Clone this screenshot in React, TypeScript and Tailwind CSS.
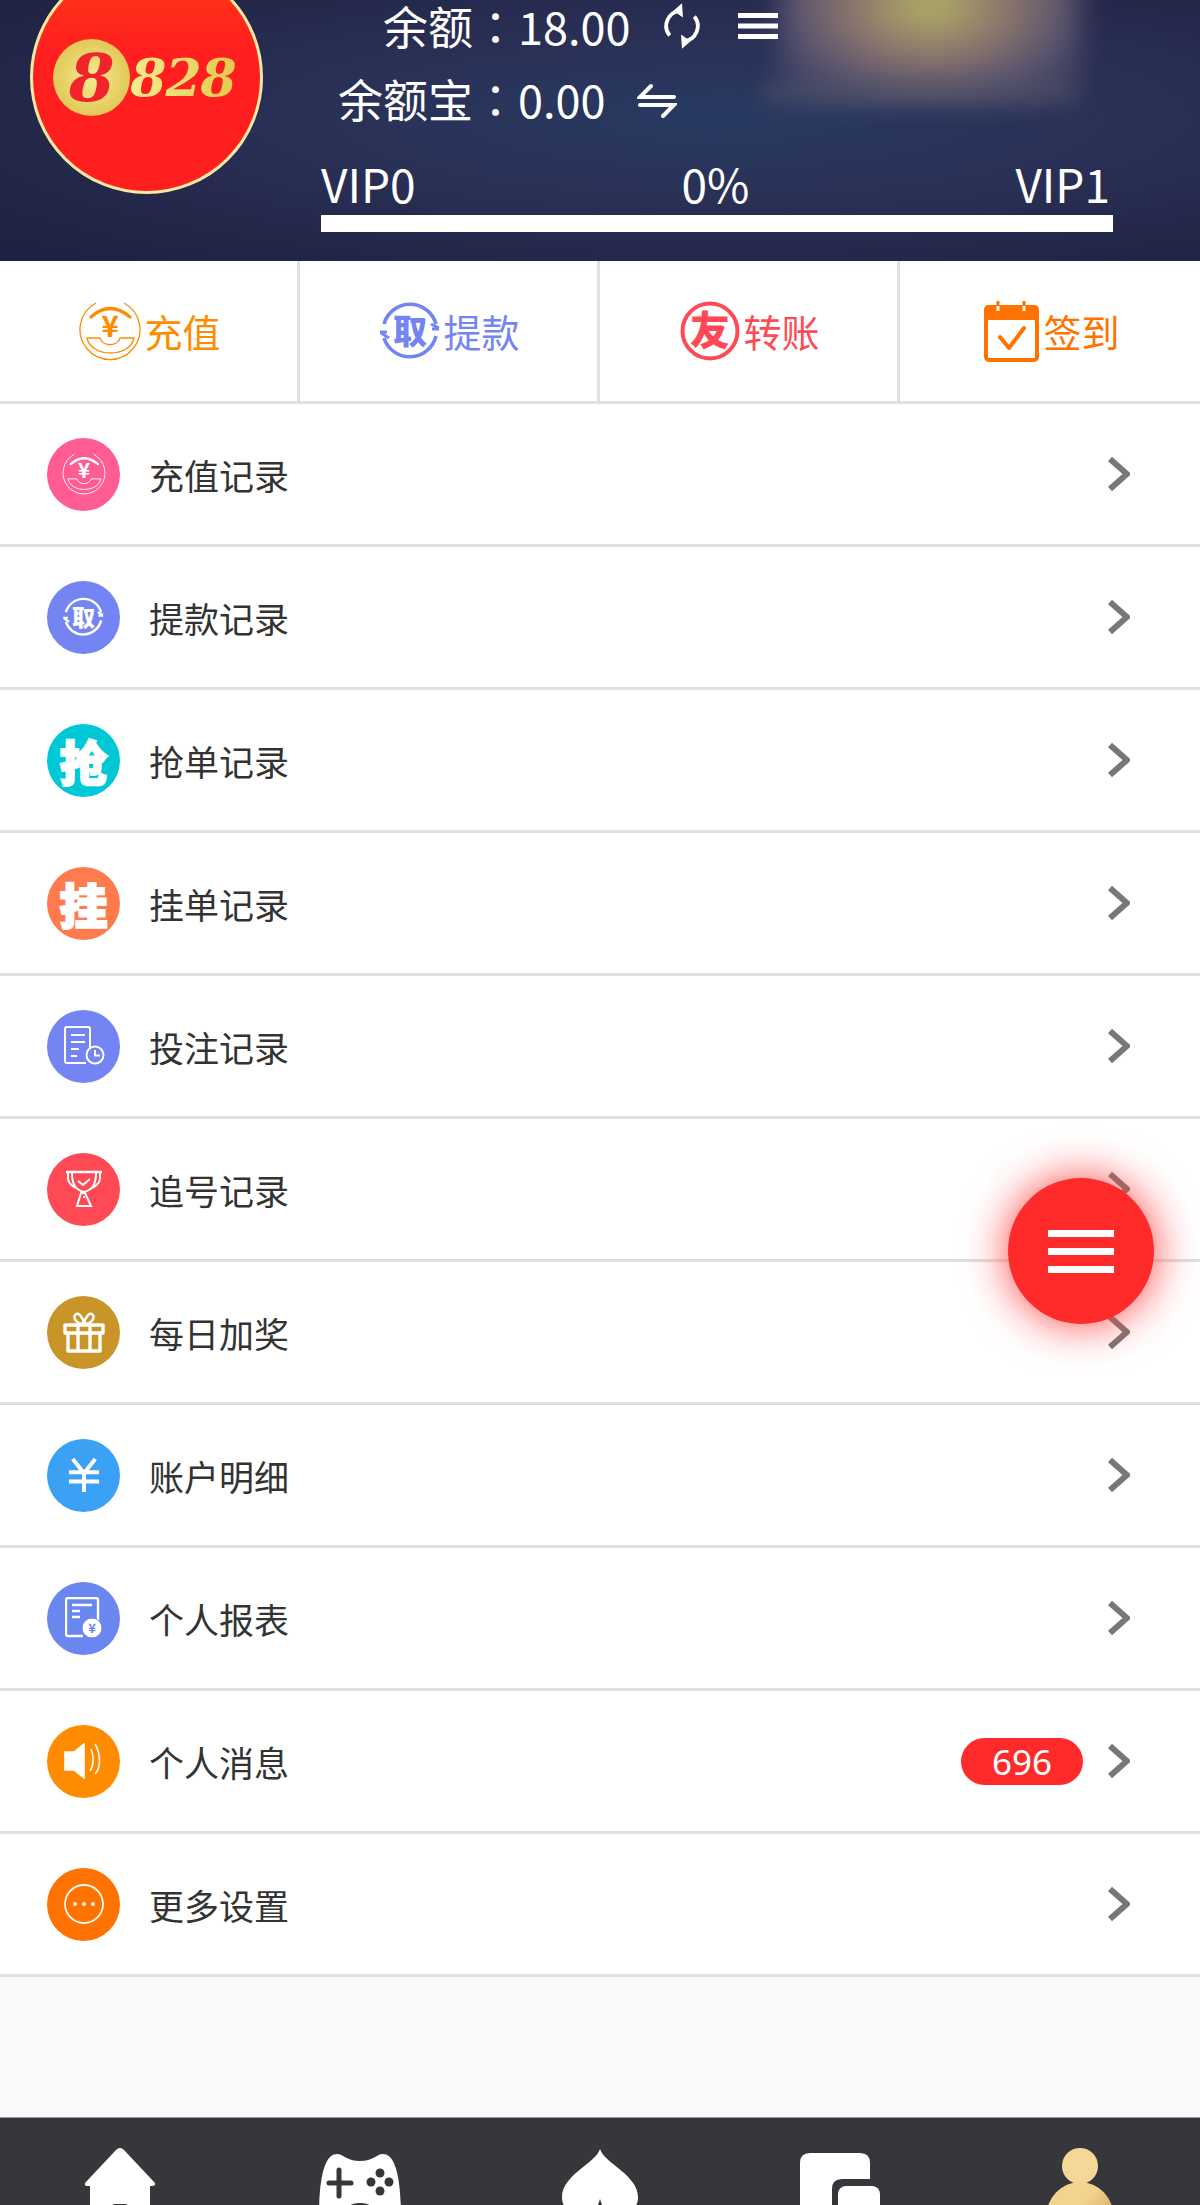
import React from 'react';

const ROWS = [
  { label: '充值记录', color: 'bg-[#ff5c93]', icon: 'coin' },
  { label: '提款记录', color: 'bg-[#7484f3]', icon: 'withdraw' },
  { label: '抢单记录', color: 'bg-[#00c8d7]', icon: 'grab' },
  { label: '挂单记录', color: 'bg-[#ff7a4d]', icon: 'hang' },
  { label: '投注记录', color: 'bg-[#7484f3]', icon: 'bet' },
  { label: '追号记录', color: 'bg-[#ff4a55]', icon: 'trophy' },
  { label: '每日加奖', color: 'bg-[#c99428]', icon: 'gift' },
  { label: '账户明细', color: 'bg-[#3ba1f5]', icon: 'yuan' },
  { label: '个人报表', color: 'bg-[#6a87f0]', icon: 'report' },
  { label: '个人消息', color: 'bg-[#ff8c00]', icon: 'sound', badge: '696' },
  { label: '更多设置', color: 'bg-[#ff7200]', icon: 'more' }
];

const CoinIcon = ({ className }: { className: string }) => (
  <svg viewBox="0 0 62 60" className={className} fill="none" stroke="currentColor">
    <path d="M17 2 A30 30 0 1 0 45 2" strokeWidth="1.3" />
    <path d="M12 16 Q31 -1 51 16" strokeWidth="3.2" strokeLinecap="round" />
    <text x="31" y="36" textAnchor="middle" fontSize="30" fontWeight="700" fill="currentColor" stroke="none">¥</text>
    <path d="M8 37 H21 C23 46 39 46 41 37 H55 C51 57 12 57 8 37 Z" strokeWidth="1.3" />
  </svg>
);

const WithdrawIcon = ({ className }: { className: string }) => (
  <svg viewBox="0 0 60 62" className={className} fill="none" stroke="currentColor">
    <path d="M4 24 A27 27 0 0 1 56 24" strokeWidth="3.6" />
    <path d="M56 36 A27 27 0 0 1 4 38" strokeWidth="3.6" />
    <path d="M1 33 L9 38 M0 32 H7" strokeWidth="3" />
    <path d="M59 28 L51 24 M59 29 H52" strokeWidth="3" />
    <text x="30" y="44" textAnchor="middle" fontSize="34" fontWeight="900" fill="currentColor" stroke="none">取</text>
  </svg>
);

const HeavyGlyph = ({ label }: { label: string }) => (
  <span className="text-[48px] leading-none font-black text-white [-webkit-text-stroke:2px_white]">{label}</span>
);

const RowIcon = ({ icon }: { icon: string }) => {
  if (icon === 'coin') return <CoinIcon className="h-[42px] w-[44px] text-white" />;
  if (icon === 'withdraw') return <WithdrawIcon className="h-[42px] w-[41px] text-white" />;
  if (icon === 'grab') return <HeavyGlyph label="抢" />;
  if (icon === 'hang') return <HeavyGlyph label="挂" />;
  if (icon === 'bet')
    return (
      <svg viewBox="0 0 44 40" className="h-[40px] w-[44px]" fill="none" stroke="white" strokeWidth="2">
        <path d="M28 26 V3 Q28 1 26 1 H5 Q3 1 3 3 V35 Q3 37 5 37 H24" />
        <path d="M9 9 H23 M9 16 H23 M9 23 H17 M9 30 H15" />
        <circle cx="33" cy="29" r="8.5" fill="#7484f3" />
        <path d="M33 24 V29.5 H38" />
      </svg>
    );
  if (icon === 'trophy')
    return (
      <svg viewBox="0 0 38 38" className="h-[38px] w-[38px]" fill="none" stroke="white" strokeWidth="2">
        <path d="M1 2 H37" strokeWidth="2.4" />
        <path d="M7 3 C7 15 11 20 19 22 C27 20 31 15 31 3" />
        <path d="M3 3 V8 C3 13 7 16 11 18 M35 3 V8 C35 13 31 16 27 18" />
        <path d="M13 11 L18 15 L25 9" />
        <path d="M16 23 L20 23 L26 36 H12 Z M19 26 V28" />
      </svg>
    );
  if (icon === 'gift')
    return (
      <svg viewBox="0 0 42 42" className="h-[42px] w-[42px]" fill="none" stroke="white" strokeWidth="3.4" strokeLinejoin="round">
        <path d="M2 14 H40 V22 H2 Z M5 22 V40 H37 V22 M15 14 V40 M27 14 V40" />
        <path d="M21 13 C14 13 10 8 12 4 C15 0 20 6 21 13 C22 6 27 0 30 4 C32 8 28 13 21 13" strokeWidth="2.4" />
      </svg>
    );
  if (icon === 'yuan')
    return (
      <svg viewBox="0 0 34 36" className="h-[36px] w-[32px]" fill="none" stroke="white" strokeWidth="4.2">
        <path d="M5 1 L17 16 L29 1 M17 16 V36 M1 15 H33 M1 25 H33" />
      </svg>
    );
  if (icon === 'report')
    return (
      <svg viewBox="0 0 38 42" className="h-[42px] w-[38px]" fill="none" stroke="white" strokeWidth="2.4">
        <path d="M33 26 V3 Q33 1 31 1 H3 Q1 1 1 3 V37 Q1 39 3 39 H18" />
        <path d="M7 8 H27 M7 14 H15 M7 20 H15" />
        <circle cx="27" cy="31" r="10" fill="white" stroke="#6a87f0" strokeWidth="1" />
        <text x="27" y="36" textAnchor="middle" fontSize="13" fontWeight="700" fill="#6a87f0" stroke="none">¥</text>
      </svg>
    );
  if (icon === 'sound')
    return (
      <svg viewBox="0 0 40 36" className="h-[36px] w-[40px]" fill="none" stroke="white" strokeWidth="1.6">
        <path d="M1 9 H10 L20 1 V35 L10 27 H1 Z" fill="white" />
        <path d="M27 6 C30 13 30 22 26 28 M31 1 C37 11 37 25 31 31" />
      </svg>
    );
  return (
    <svg viewBox="0 0 40 40" className="h-[40px] w-[40px]" fill="none" stroke="white" strokeWidth="1.8">
      <circle cx="20" cy="20" r="19" />
      <circle cx="11" cy="20" r="2" fill="white" stroke="none" />
      <circle cx="20" cy="20" r="2" fill="white" stroke="none" />
      <circle cx="29" cy="20" r="2" fill="white" stroke="none" />
    </svg>
  );
};

const Colon = () => <span className="font-['Noto_Sans_CJK_TC',sans-serif]">：</span>;

const Header = () => (
  <div className="relative flex h-[261px] items-start overflow-hidden bg-[radial-gradient(ellipse_at_60%_45%,#283a62_0%,#2a3055_42%,#1c2040_100%)]">
    <div className="absolute top-[-90px] left-[780px] h-[190px] w-[300px] bg-[radial-gradient(ellipse_at_center,#c4c268_0%,#967c70_38%,#5a5570_68%,#3a3f6000_100%)] opacity-90 blur-[14px]" />
    <div className="absolute top-[80px] left-[760px] h-[24px] w-[320px] rounded-full bg-[#5a5a6a66] blur-[10px]" />
    <div className="relative ml-[30px] mt-[-39px] flex h-[233px] w-[233px] shrink-0 items-center justify-center rounded-full border-[3px] border-[#fbe9a6] bg-[linear-gradient(180deg,#ff3a14,#ff1f1f_40%)] font-['DejaVu_Serif',serif] italic font-bold">
      <div className="flex h-[77px] w-[77px] shrink-0 items-center justify-center rounded-full bg-[radial-gradient(circle,#f7ec90,#d8ba42)] text-[66px] leading-none text-[#f0242a]">
        8
      </div>
      <span className="bg-[linear-gradient(90deg,#f6ec8c,#e3c94c)] bg-clip-text pr-[4px] text-[52px] leading-[70px] tracking-[-1px] text-transparent">
        828
      </span>
    </div>
    <div className="relative ml-[58px] flex w-[792px] flex-col text-white">
      <div className="flex h-[52px] items-center text-[45px] leading-[52px]">
        <span className="w-[197px] text-right">
          余额
          <Colon />
        </span>
        <span>18.00</span>
        <svg viewBox="0 0 40 52" className="ml-[33px] h-[52px] w-[38px]" fill="none" stroke="white" strokeWidth="4">
          <path d="M7 36 A16 16 0 0 1 18 10 M33 16 A16 16 0 0 1 22 42" />
          <path d="M20 2 L11 10 L21 17 Z M20 50 L29 42 L19 35 Z" fill="white" stroke="none" />
        </svg>
        <svg viewBox="0 0 40 26" className="ml-[37px] h-[26px] w-[40px]" fill="white">
          <rect y="0" width="40" height="5" />
          <rect y="10.5" width="40" height="5" />
          <rect y="21" width="40" height="5" />
        </svg>
      </div>
      <div className="mt-[21px] flex h-[52px] items-center text-[45px] leading-[52px]">
        <span className="w-[197px] text-right">
          余额宝
          <Colon />
        </span>
        <span>0.00</span>
        <svg viewBox="0 0 40 36" className="ml-[32px] mt-[4px] h-[36px] w-[40px]" fill="none" stroke="white" strokeWidth="4" strokeLinecap="round">
          <path d="M14 3 L3 14 H37 M26 33 L37 22 H3" />
        </svg>
      </div>
      <div className="mt-[31px] flex items-end justify-between pr-[3px] text-[46px] leading-[54px]">
        <span>VIP0</span>
        <span>0%</span>
        <span>VIP1</span>
      </div>
      <div className="mt-[5px] h-[17px] w-full bg-white" />
    </div>
  </div>
);

const ActionCell = ({
  label,
  color,
  last,
  children
}: {
  label: string;
  color: string;
  last?: boolean;
  children: React.ReactNode;
}) => (
  <div className={`flex w-[300px] items-center justify-center gap-[3px] pl-[3px] ${last ? '' : 'border-r-[3px] border-[#e0e0e0]'} ${color}`}>
    {children}
    <span className="text-[38px] leading-[50px]">{label}</span>
  </div>
);

const Actions = () => (
  <div className="flex h-[143px] border-b-[3px] border-[#e0e0e0] bg-white">
    <ActionCell label="充值" color="text-[#ff8c00]">
      <CoinIcon className="h-[60px] w-[62px]" />
    </ActionCell>
    <ActionCell label="提款" color="text-[#7484f3]">
      <WithdrawIcon className="h-[62px] w-[60px]" />
    </ActionCell>
    <ActionCell label="转账" color="text-[#ff4a55]">
      <svg viewBox="0 0 60 60" className="h-[60px] w-[60px]" fill="none" stroke="currentColor">
        <circle cx="30" cy="30" r="27.5" strokeWidth="4" />
        <text x="30" y="44" textAnchor="middle" fontSize="40" fontWeight="900" fill="currentColor" stroke="none">友</text>
      </svg>
    </ActionCell>
    <ActionCell label="签到" color="text-[#ff7200]" last>
      <svg viewBox="0 0 57 62" className="h-[62px] w-[57px]" fill="none" stroke="currentColor">
        <path d="M6 5 H51 Q56 5 56 10 V20 H1 V10 Q1 5 6 5 Z" fill="currentColor" stroke="none" />
        <rect x="3" y="18" width="51" height="42" rx="3" strokeWidth="4" />
        <path d="M15 6 V1 M41 6 V1" stroke="currentColor" strokeWidth="3" />
        <path d="M15 6 V11 M41 6 V11" stroke="white" strokeWidth="3" />
        <path d="M17 37 L26 48 L41 28" strokeWidth="4" strokeLinecap="round" strokeLinejoin="round" />
      </svg>
    </ActionCell>
  </div>
);

const Row = ({ label, color, icon, badge }: { label: string; color: string; icon: string; badge?: string }) => (
  <div className="flex h-[143px] items-center border-b-[3px] border-[#e0e0e0] bg-white pl-[47px] pr-[70px]">
    <div className={`flex h-[73px] w-[73px] shrink-0 items-center justify-center overflow-hidden rounded-full ${color}`}>
      <RowIcon icon={icon} />
    </div>
    <span className="ml-[29px] flex-1 pt-[2px] text-[35px] leading-[46px] text-[#333]">{label}</span>
    {badge && (
      <span className="mr-[25px] flex h-[47px] w-[122px] items-center justify-center rounded-full bg-[#ff2a2a] font-['Noto_Sans',sans-serif] text-[35px] leading-none text-white">
        {badge}
      </span>
    )}
    <svg viewBox="0 0 22 34" className="h-[34px] w-[22px]" fill="none" stroke="#777" strokeWidth="6">
      <path d="M2 2 L19 17 L2 32" />
    </svg>
  </div>
);

const Footer = () => (
  <div className="grid h-[88px] grid-cols-5 overflow-hidden border-t border-[#999] bg-[#36373b]">
    <div className="flex justify-center pt-[30px]">
      <svg viewBox="0 0 72 72" className="h-[72px] w-[72px] shrink-0" fill="white">
        <path d="M36 0 Q38 0 40 2 L71 35 Q72 38 68 38 H66 V72 H6 V38 H3 Q0 38 1 35 L32 2 Q34 0 36 0 Z" />
        <rect x="28" y="56" width="16" height="20" rx="3" fill="#36373b" />
      </svg>
    </div>
    <div className="flex justify-center pt-[36px]">
      <svg viewBox="0 0 82 64" className="h-[64px] w-[82px] shrink-0" fill="white">
        <path d="M18 0 C24 0 28 7 41 7 C54 7 58 0 64 0 C76 0 82 22 82 64 H0 C0 22 6 0 18 0 Z" />
        <path d="M20 16 V42 M10 29 H32" stroke="#36373b" strokeWidth="5" strokeLinecap="round" />
        <circle cx="61" cy="19" r="4.5" fill="#36373b" />
        <circle cx="61" cy="37" r="4.5" fill="#36373b" />
        <circle cx="52" cy="28" r="4.5" fill="#36373b" />
        <circle cx="70" cy="28" r="4.5" fill="#36373b" />
        <path d="M20 64 C26 44 56 44 62 64 Z" fill="#36373b" />
      </svg>
    </div>
    <div className="flex justify-center pt-[31px]">
      <svg viewBox="0 0 76 72" className="h-[72px] w-[76px] shrink-0" fill="white">
        <path d="M38 0 C42 14 76 26 76 48 C76 60 66 68 56 68 C48 68 42 64 38 58 C34 64 28 68 20 68 C10 68 0 60 0 48 C0 26 34 14 38 0 Z" />
        <path d="M38 50 L36 56 H40 Z" fill="#36373b" />
      </svg>
    </div>
    <div className="flex justify-center pt-[35px]">
      <svg viewBox="0 0 80 70" className="h-[70px] w-[80px] shrink-0" fill="white">
        <path d="M10 0 H60 Q70 0 70 10 V26 H42 Q32 26 32 36 V70 H10 Q0 70 0 60 V10 Q0 0 10 0 Z" />
        <rect x="38" y="33" width="42" height="40" rx="8" />
      </svg>
    </div>
    <div className="flex justify-center pt-[30px]">
      <svg viewBox="0 0 68 72" className="h-[72px] w-[68px] shrink-0">
        <defs>
          <linearGradient id="body" x1="0" y1="0" x2="1" y2="1">
            <stop offset="0.4" stopColor="#f3d48f" />
            <stop offset="1" stopColor="#c9863a" />
          </linearGradient>
        </defs>
        <ellipse cx="34" cy="18" rx="18" ry="18" fill="#f5d898" />
        <ellipse cx="34" cy="70" rx="34" ry="36" fill="url(#body)" />
      </svg>
    </div>
  </div>
);

export default function App() {
  return (
    <div className="relative h-[2205px] overflow-hidden bg-[#f9f9f9] font-['Noto_Sans_CJK_SC','Noto_Sans',sans-serif]">
      <Header />
      <Actions />
      {ROWS.map(row => (
        <Row key={row.label} {...row} />
      ))}
      <div className="h-[140px]" />
      <Footer />
      <button className="absolute top-[1178px] left-[1008px] flex h-[146px] w-[146px] flex-col items-center justify-center gap-[11px] rounded-full bg-[#ff2a2a] shadow-[0_0_45px_#ff4040]">
        <span className="h-[7px] w-[66px] bg-white" />
        <span className="h-[7px] w-[66px] bg-white" />
        <span className="h-[7px] w-[66px] bg-white" />
      </button>
    </div>
  );
}
